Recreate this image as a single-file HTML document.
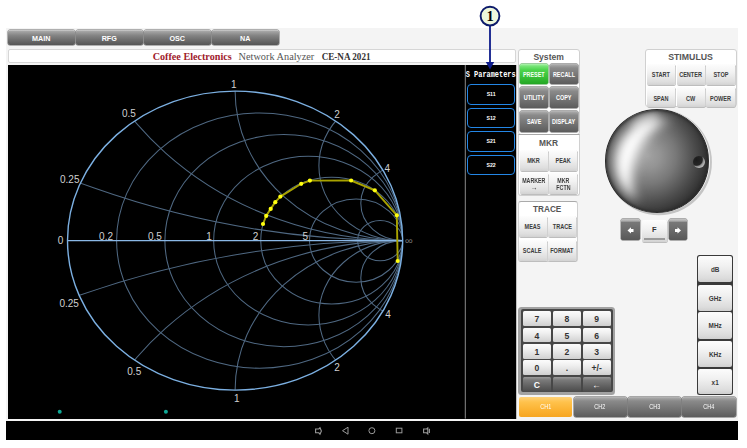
<!DOCTYPE html>
<html><head><meta charset="utf-8">
<style>
*{margin:0;padding:0;box-sizing:border-box}
html,body{width:747px;height:448px;overflow:hidden;background:#fff;font-family:"Liberation Sans",sans-serif}
.a{position:absolute}
#panel{left:6px;top:27.6px;width:732px;height:393.4px;background:#f4f4f4}
.tab{position:absolute;top:30px;height:15px;width:66.5px;border-radius:2px;
 background:linear-gradient(#d0d0d0 0,#a4a4a4 10%,#858585 35%,#6a6a6a 70%,#555 100%);
 color:#fff;font-weight:bold;font-size:7.2px;line-height:17.5px;text-align:center;box-shadow:0 0 0 0.5px #6a6a6a}
#title{left:7.5px;top:48.8px;width:508.8px;height:14px;background:#fff;border:1px solid #d6d6d6;border-radius:2px}
#chart{left:8px;top:65px;width:509px;height:353.6px;background:#000;border-right:1px solid #c0c0c0}
.box{position:absolute;background:#fff;border:1px solid #d0d0d0;border-radius:3px}
.btn{position:absolute;border-radius:1.5px;font-weight:bold;text-align:center;white-space:nowrap;overflow:hidden;display:flex;align-items:center;justify-content:center;flex-direction:column}
.btn span{display:inline-block;transform-origin:center}
.dk{background:linear-gradient(#b8b8b8 0,#a0a0a0 8%,#8a8a8a 20%,#767676 55%,#5c5c5c 100%);color:#fff;box-shadow:0 0 0 0.5px #5a5a5a}
.gr{background:linear-gradient(#b0f4b0 0,#78e478 10%,#4cd44c 30%,#38c038 65%,#24a624 100%);color:#f4fff4;box-shadow:0 0 0 0.5px #3a9a3a}
.lt{background:linear-gradient(#fdfdfd 0,#f2f2f2 40%,#dedede 85%,#d2d2d2 100%);color:#3c3c3c;box-shadow:0.5px 0.8px 0.6px 0.2px #bdbdbd}
.ttl{position:absolute;color:#545454;text-align:center;font-size:9px;font-weight:bold;white-space:nowrap}
.ttl span{display:inline-block;transform-origin:center}
.sp{position:absolute;left:466.8px;width:48.7px;height:20.9px;border:1.6px solid #2386e6;border-radius:4px;color:#fff;
 font-size:5.2px;font-weight:bold;text-align:center;line-height:18px}
.key{position:absolute;height:14.6px;width:28.3px;border-radius:1.5px;text-align:center;font-weight:bold;font-size:8.6px;line-height:16.2px}
.kl{background:linear-gradient(#fcfcfc 0,#f0f0f0 35%,#dadada 80%,#cfcfcf 100%);color:#333}
.kd{background:linear-gradient(#9a9a9a 0,#7a7a7a 20%,#5e5e5e 65%,#4a4a4a 100%);color:#fff}
.unit{position:absolute;left:697.8px;width:34.7px;height:26.6px;border-radius:2px;color:#3a3a3a;font-size:6.4px;font-weight:bold;text-align:center;line-height:27.5px;
 background:linear-gradient(#fcfcfc 0,#f0f0f0 40%,#dcdcdc 85%,#d0d0d0 100%)}
.ch{position:absolute;top:397.2px;height:20.3px;width:53.3px;border-radius:2px;color:#fff;font-size:6.7px;text-align:center;line-height:20.5px}
.ch span{display:inline-block;transform:scaleX(0.82)}
</style></head><body>
<div id="panel" class="a"></div>
<div class="tab" style="left:8px">MAIN</div>
<div class="tab" style="left:76px">RFG</div>
<div class="tab" style="left:144px">OSC</div>
<div class="tab" style="left:212px">NA</div>
<div id="title" class="a"></div>
<svg class="a" style="left:0;top:0" width="747" height="448" font-family="Liberation Serif" font-size="11px">
<text x="152.7" y="59.7" fill="#a01a2c" font-weight="bold" textLength="79" lengthAdjust="spacingAndGlyphs">Coffee Electronics</text>
<text x="238.6" y="59.7" fill="#555" textLength="75.7" lengthAdjust="spacingAndGlyphs">Network Analyzer</text>
<text x="321.7" y="59.7" fill="#333" font-weight="bold" textLength="48.8" lengthAdjust="spacingAndGlyphs">CE-NA 2021</text>
</svg>
<div id="chart" class="a"></div>
<svg class="a" style="left:0;top:0" width="747" height="448">
<defs><clipPath id="uc"><ellipse cx="235.1" cy="240.6" rx="167.6" ry="149.5"/></clipPath></defs>
<g clip-path="url(#uc)" fill="none" stroke="#4f6882" stroke-width="1.05">
<ellipse cx="259.65" cy="240.60" rx="143.05" ry="127.60"/>
<ellipse cx="283.79" cy="240.60" rx="118.91" ry="106.07"/>
<ellipse cx="308.17" cy="240.60" rx="94.53" ry="84.32"/>
<ellipse cx="331.72" cy="240.60" rx="70.98" ry="63.31"/>
<ellipse cx="356.11" cy="240.60" rx="46.59" ry="41.56"/>
<ellipse cx="380.16" cy="240.60" rx="22.54" ry="20.11"/>
<ellipse cx="402.70" cy="-506.90" rx="838.00" ry="747.50"/>
<ellipse cx="402.70" cy="1027.44" rx="882.11" ry="786.84"/>
<ellipse cx="402.70" cy="-58.40" rx="335.20" ry="299.00"/>
<ellipse cx="402.70" cy="539.60" rx="335.20" ry="299.00"/>
<ellipse cx="402.70" cy="91.10" rx="167.60" ry="149.50"/>
<ellipse cx="402.70" cy="390.10" rx="167.60" ry="149.50"/>
<ellipse cx="402.70" cy="165.85" rx="83.80" ry="74.75"/>
<ellipse cx="402.70" cy="315.35" rx="83.80" ry="74.75"/>
<ellipse cx="402.70" cy="203.22" rx="41.90" ry="37.38"/>
<ellipse cx="402.70" cy="277.98" rx="41.90" ry="37.38"/>
</g>
<line x1="67.5" y1="240.6" x2="402.7" y2="240.6" stroke="#8ab8e6" stroke-width="1.4"/>
<ellipse cx="235.1" cy="240.6" rx="167.6" ry="149.5" fill="none" stroke="#7cb0e2" stroke-width="1.4"/>
<g fill="#d0d0d0" font-size="10px" font-family="Liberation Sans">
<text x="231.0" y="87.9">1</text>
<text x="121.9" y="117.2">0.5</text>
<text x="334.3" y="118.4">2</text>
<text x="60.0" y="183.4">0.25</text>
<text x="384.6" y="171.6">4</text>
<text x="57.7" y="244.3">0</text>
<text x="99.1" y="240.0">0.2</text>
<text x="148.0" y="240.0">0.5</text>
<text x="206.2" y="240.0">1</text>
<text x="252.8" y="240.0">2</text>
<text x="302.6" y="240.0">5</text>
<text x="59.4" y="307.0">0.25</text>
<text x="127.3" y="374.9">0.5</text>
<text x="234.0" y="401.8">1</text>
<text x="334.3" y="371.0">2</text>
<text x="385.2" y="318.0">4</text>
</g>
<text x="405" y="243.6" font-size="10px" fill="#707070" font-family="Liberation Sans" textLength="7.8" lengthAdjust="spacingAndGlyphs">∞</text>
<polyline points="263.0,224.0 266.2,215.9 270.7,208.9 275.3,202.2 280.4,196.6 301.2,183.8 309.9,180.6 351.1,180.5 374.8,190.3 396.8,215.3 397.7,261.0" fill="none" stroke="#a8a200" stroke-width="1.9"/>
<g fill="#ffff10">
<circle cx="263.0" cy="224.0" r="2.1"/>
<circle cx="266.2" cy="215.9" r="2.1"/>
<circle cx="270.7" cy="208.9" r="2.1"/>
<circle cx="275.3" cy="202.2" r="2.1"/>
<circle cx="280.4" cy="196.6" r="2.1"/>
<circle cx="301.2" cy="183.8" r="2.1"/>
<circle cx="309.9" cy="180.6" r="2.1"/>
<circle cx="351.1" cy="180.5" r="2.1"/>
<circle cx="374.8" cy="190.3" r="2.1"/>
<circle cx="396.8" cy="215.3" r="2.1"/>
<circle cx="397.7" cy="261.0" r="2.1"/>
</g>
<circle cx="59.7" cy="411.7" r="2" fill="#10a896"/>
<circle cx="165.9" cy="411.7" r="2" fill="#10a896"/>
<line x1="465.3" y1="65" x2="465.3" y2="418.6" stroke="#8a8a8a" stroke-width="1"/>
<text x="465.8" y="77.1" font-family="Liberation Mono" font-weight="bold" font-size="8.4px" fill="#fff" textLength="49.8" lengthAdjust="spacingAndGlyphs">S Parameters</text>
</svg>
<div class="sp" style="top:84px">S11</div>
<div class="sp" style="top:107.5px">S12</div>
<div class="sp" style="top:131px">S21</div>
<div class="sp" style="top:154.5px">S22</div>

<div class="box" style="left:518.3px;top:49px;width:61.8px;height:86px"></div>
<div class="box" style="left:518.2px;top:134.2px;width:61.9px;height:62.3px;border-top-color:#a8a8a8;border-radius:0 0 3px 3px"></div>
<div class="box" style="left:517.5px;top:201.3px;width:60px;height:61.2px;border-top-color:#aaa"></div>
<div class="box" style="left:645.2px;top:49.1px;width:91.8px;height:58.3px"></div>
<svg class="a" style="left:0;top:0" width="747" height="448" font-family="Liberation Sans" font-weight="bold" font-size="9px" fill="#555">
<text x="533.4" y="59.8" textLength="30.5" lengthAdjust="spacingAndGlyphs">System</text>
<text x="538.9" y="145.8" textLength="19.1" lengthAdjust="spacingAndGlyphs">MKR</text>
<text x="533.1" y="212.1" textLength="28.2" lengthAdjust="spacingAndGlyphs">TRACE</text>
<text x="668.2" y="59.8" textLength="44.7" lengthAdjust="spacingAndGlyphs">STIMULUS</text>
</svg>
<div class="btn gr" style="left:520.1px;top:63.9px;width:28px;height:20.6px;"><span style="font-size:6.9px;transform:translateY(0.4px) scaleX(0.79)">PRESET</span></div>
<div class="btn dk" style="left:550px;top:63.9px;width:27.9px;height:20.6px;"><span style="font-size:6.9px;transform:translateY(0.4px) scaleX(0.79)">RECALL</span></div>
<div class="btn dk" style="left:520.1px;top:87.4px;width:28px;height:20.6px;"><span style="font-size:6.9px;transform:translateY(0.4px) scaleX(0.79)">UTILITY</span></div>
<div class="btn dk" style="left:550px;top:87.4px;width:27.9px;height:20.6px;"><span style="font-size:6.9px;transform:translateY(0.4px) scaleX(0.79)">COPY</span></div>
<div class="btn dk" style="left:520.1px;top:111px;width:28px;height:20.6px;"><span style="font-size:6.9px;transform:translateY(0.4px) scaleX(0.79)">SAVE</span></div>
<div class="btn dk" style="left:550px;top:111px;width:27.9px;height:20.6px;"><span style="font-size:6.9px;transform:translateY(0.4px) scaleX(0.79)">DISPLAY</span></div>
<div class="btn lt" style="left:520px;top:149.7px;width:28px;height:21px;"><span style="font-size:6.6px;transform:translateY(-0.4px) scaleX(0.84)">MKR</span></div>
<div class="btn lt" style="left:549.2px;top:149.7px;width:28.2px;height:21px;"><span style="font-size:6.6px;transform:translateY(-0.4px) scaleX(0.84)">PEAK</span></div>
<div class="btn lt" style="left:520px;top:173.3px;width:28px;height:21px;line-height:7px"><span style="font-size:6.3px;transform:translateY(0px) scaleX(0.84)">MARKER<br><b style="font-size:8px;line-height:7px">→</b></span></div>
<div class="btn lt" style="left:549.2px;top:173.3px;width:28.2px;height:21px;line-height:7px"><span style="font-size:6.3px;transform:translateY(0px) scaleX(0.84)">MKR<br>FCTN</span></div>
<div class="btn lt" style="left:518.6px;top:216.1px;width:28px;height:21px;"><span style="font-size:6.6px;transform:translateY(-0.3px) scaleX(0.84)">MEAS</span></div>
<div class="btn lt" style="left:547.8px;top:216.1px;width:28.6px;height:21px;"><span style="font-size:6.6px;transform:translateY(-0.3px) scaleX(0.84)">TRACE</span></div>
<div class="btn lt" style="left:518.6px;top:239.9px;width:28px;height:21px;"><span style="font-size:6.6px;transform:translateY(-0.4px) scaleX(0.84)">SCALE</span></div>
<div class="btn lt" style="left:547.8px;top:239.9px;width:28.6px;height:21px;"><span style="font-size:6.6px;transform:translateY(-0.4px) scaleX(0.84)">FORMAT</span></div>
<div class="btn lt" style="left:646.9px;top:63.75px;width:28.4px;height:20.75px;"><span style="font-size:6.6px;transform:translateY(-0.4px) scaleX(0.84)">START</span></div>
<div class="btn lt" style="left:676.6px;top:63.75px;width:28.4px;height:20.75px;"><span style="font-size:6.6px;transform:translateY(-0.4px) scaleX(0.84)">CENTER</span></div>
<div class="btn lt" style="left:706.25px;top:63.75px;width:28.75px;height:20.75px;"><span style="font-size:6.6px;transform:translateY(-0.4px) scaleX(0.84)">STOP</span></div>
<div class="btn lt" style="left:646.9px;top:86.9px;width:28.4px;height:20.1px;"><span style="font-size:6.6px;transform:translateY(1.9px) scaleX(0.84)">SPAN</span></div>
<div class="btn lt" style="left:676.6px;top:86.9px;width:28.4px;height:20.1px;"><span style="font-size:6.6px;transform:translateY(1.9px) scaleX(0.84)">CW</span></div>
<div class="btn lt" style="left:706.25px;top:86.9px;width:28.75px;height:20.1px;"><span style="font-size:6.6px;transform:translateY(1.9px) scaleX(0.84)">POWER</span></div>
<!-- knob -->
<div class="a" style="left:605.6px;top:109.4px;width:104.6px;height:104px;border-radius:50%;box-shadow:0.9px 1.2px 0 1px #c4c4c4"></div>
<div class="a" style="left:604.8px;top:108.8px;width:104.6px;height:103.8px;border-radius:50%;overflow:hidden;
 background:radial-gradient(circle 68px at 42px 46px, #a2a2a2 0, #949494 12px, #787878 28px, #4e4e4e 46px, #303030 60px, #242424 68px);
 border:1px solid #2c2c2c">
<div class="a" style="left:9px;top:9px;width:88px;height:88px;border-radius:50%;border-left:21px solid rgba(255,255,255,1);filter:blur(6px);transform:rotate(22deg)"></div>
<div class="a" style="left:24px;top:4px;width:30px;height:14px;border-radius:50%;background:rgba(255,255,255,0.45);filter:blur(4px);transform:rotate(-28deg)"></div>
<div class="a" style="left:0;top:0;width:102.6px;height:101.8px;border-radius:50%;box-shadow:inset 0 0 2.5px 1px rgba(40,40,40,0.75)"></div>
</div>
<div class="a" style="left:693.1px;top:155.8px;width:11.8px;height:12.2px;border-radius:50%;background:radial-gradient(circle 10px at 3.5px 3.5px,#1c1c1c 0,#262626 58%,#8e8e8e 70%,#b2b2b2 85%,#a8a8a8 100%)"></div>
<!-- arrows F -->
<div class="btn" style="left:621.3px;top:219.3px;width:18.7px;height:21px;border-radius:1.5px;background:linear-gradient(#c4c4c4 0,#aaa 10%,#787878 16%,#6c6c6c 50%,#585858 100%);box-shadow:0 0 0 0.4px #666"></div>
<div class="btn lt" style="left:641.8px;top:219.5px;width:25.2px;height:22px;font-size:7.5px;color:#333"><span style="transform:translateY(-1px)">F</span></div>
<div class="a" style="left:644px;top:238.3px;width:21px;height:1.6px;background:#9a9a9a"></div>
<div class="btn" style="left:668.6px;top:219.3px;width:18.7px;height:21px;border-radius:1.5px;background:linear-gradient(#c4c4c4 0,#aaa 10%,#787878 16%,#6c6c6c 50%,#585858 100%);box-shadow:0 0 0 0.4px #666"></div>
<svg class="a" style="left:0;top:0" width="747" height="448">
<path d="M627.5 230.4 L631 227.2 L631 228.9 L633.5 228.9 L633.5 231.9 L631 231.9 L631 233.6 Z" fill="#fff"/>
<path d="M681 230.4 L677.5 227.2 L677.5 228.9 L675 228.9 L675 231.9 L677.5 231.9 L677.5 233.6 Z" fill="#fff"/>
</svg>
<!-- units -->
<div class="a" style="left:697px;top:254.6px;width:36.4px;height:140.7px;background:#3a3a3a;border-radius:2.5px"></div>
<div class="unit" style="top:255.8px">dB</div>
<div class="unit" style="top:284.5px">GHz</div>
<div class="unit" style="top:312.4px">MHz</div>
<div class="unit" style="top:340.5px">KHz</div>
<div class="unit" style="top:368.6px;height:25.6px">x1</div>
<!-- keypad -->
<div class="a" style="left:518.3px;top:306.5px;width:96.8px;height:88.4px;background:#a2a2a2;border-radius:3.5px"></div><div class="a" style="left:520.8px;top:309px;width:91.8px;height:83.4px;background:#474747;border-radius:2px"></div>
<div class="key kl" style="left:522.8px;top:311px">7</div>
<div class="key kl" style="left:552.8px;top:311px">8</div>
<div class="key kl" style="left:582.5px;top:311px">9</div>
<div class="key kl" style="left:522.8px;top:327.5px">4</div>
<div class="key kl" style="left:552.8px;top:327.5px">5</div>
<div class="key kl" style="left:582.5px;top:327.5px">6</div>
<div class="key kl" style="left:522.8px;top:344px">1</div>
<div class="key kl" style="left:552.8px;top:344px">2</div>
<div class="key kl" style="left:582.5px;top:344px">3</div>
<div class="key kl" style="left:522.8px;top:360.2px">0</div>
<div class="key kl" style="left:552.8px;top:360.2px">.</div>
<div class="key kl" style="left:582.5px;top:360.2px">+/-</div>
<div class="key kd" style="left:522.8px;top:377px">C</div>
<div class="key kd" style="left:552.8px;top:377px"></div>
<div class="key kd" style="left:582.5px;top:377px">←</div>
<!-- CH -->
<div class="ch" style="left:519px;background:linear-gradient(#ffd27a 0,#ffc24c 25%,#fbb232 65%,#f6a520 100%)"><span>CH1</span></div>
<div class="ch dk" style="left:573.5px"><span>CH2</span></div>
<div class="ch dk" style="left:628px"><span>CH3</span></div>
<div class="ch dk" style="left:682.3px"><span>CH4</span></div>
<!-- nav bar -->
<div class="a" style="left:6px;top:421px;width:732px;height:19px;background:#000"></div>
<svg class="a" style="left:0;top:0" width="747" height="448" fill="none" stroke="#9a9a9a" stroke-width="1">
<path d="M315.6 429 L318.8 429 L320 427.8 L321.4 431 L320 434.2 L318.8 432.8 L315.6 432.8 Z" stroke-width="1.1"/>
<path d="M348 427.2 v7 l-5.5 -3.5 z"/>
<circle cx="371.9" cy="430.7" r="3"/>
<rect x="396.3" y="428.2" width="5.6" height="4.6"/>
<path d="M423.6 429 L426.6 429 L427.8 427.9 L427.8 434 L426.6 432.8 L423.6 432.8 Z M429.4 428.8 L429.4 433" stroke-width="1.1"/>
</svg>
<!-- callout -->
<svg class="a" style="left:0;top:0" width="747" height="448">
<line x1="490" y1="25" x2="490" y2="63" stroke="#0c1a8a" stroke-width="1.8"/>
<path d="M485.8 62 L494.2 62 L490 69.6 Z" fill="#0c1a8a"/>
<circle cx="490" cy="16.1" r="9.4" fill="#eef8dc" stroke="#0c1a6a" stroke-width="1.9"/>
<text x="490" y="20.8" text-anchor="middle" font-family="Liberation Serif" font-weight="bold" font-size="14.5px" fill="#000">1</text>
</svg>
</body></html>
